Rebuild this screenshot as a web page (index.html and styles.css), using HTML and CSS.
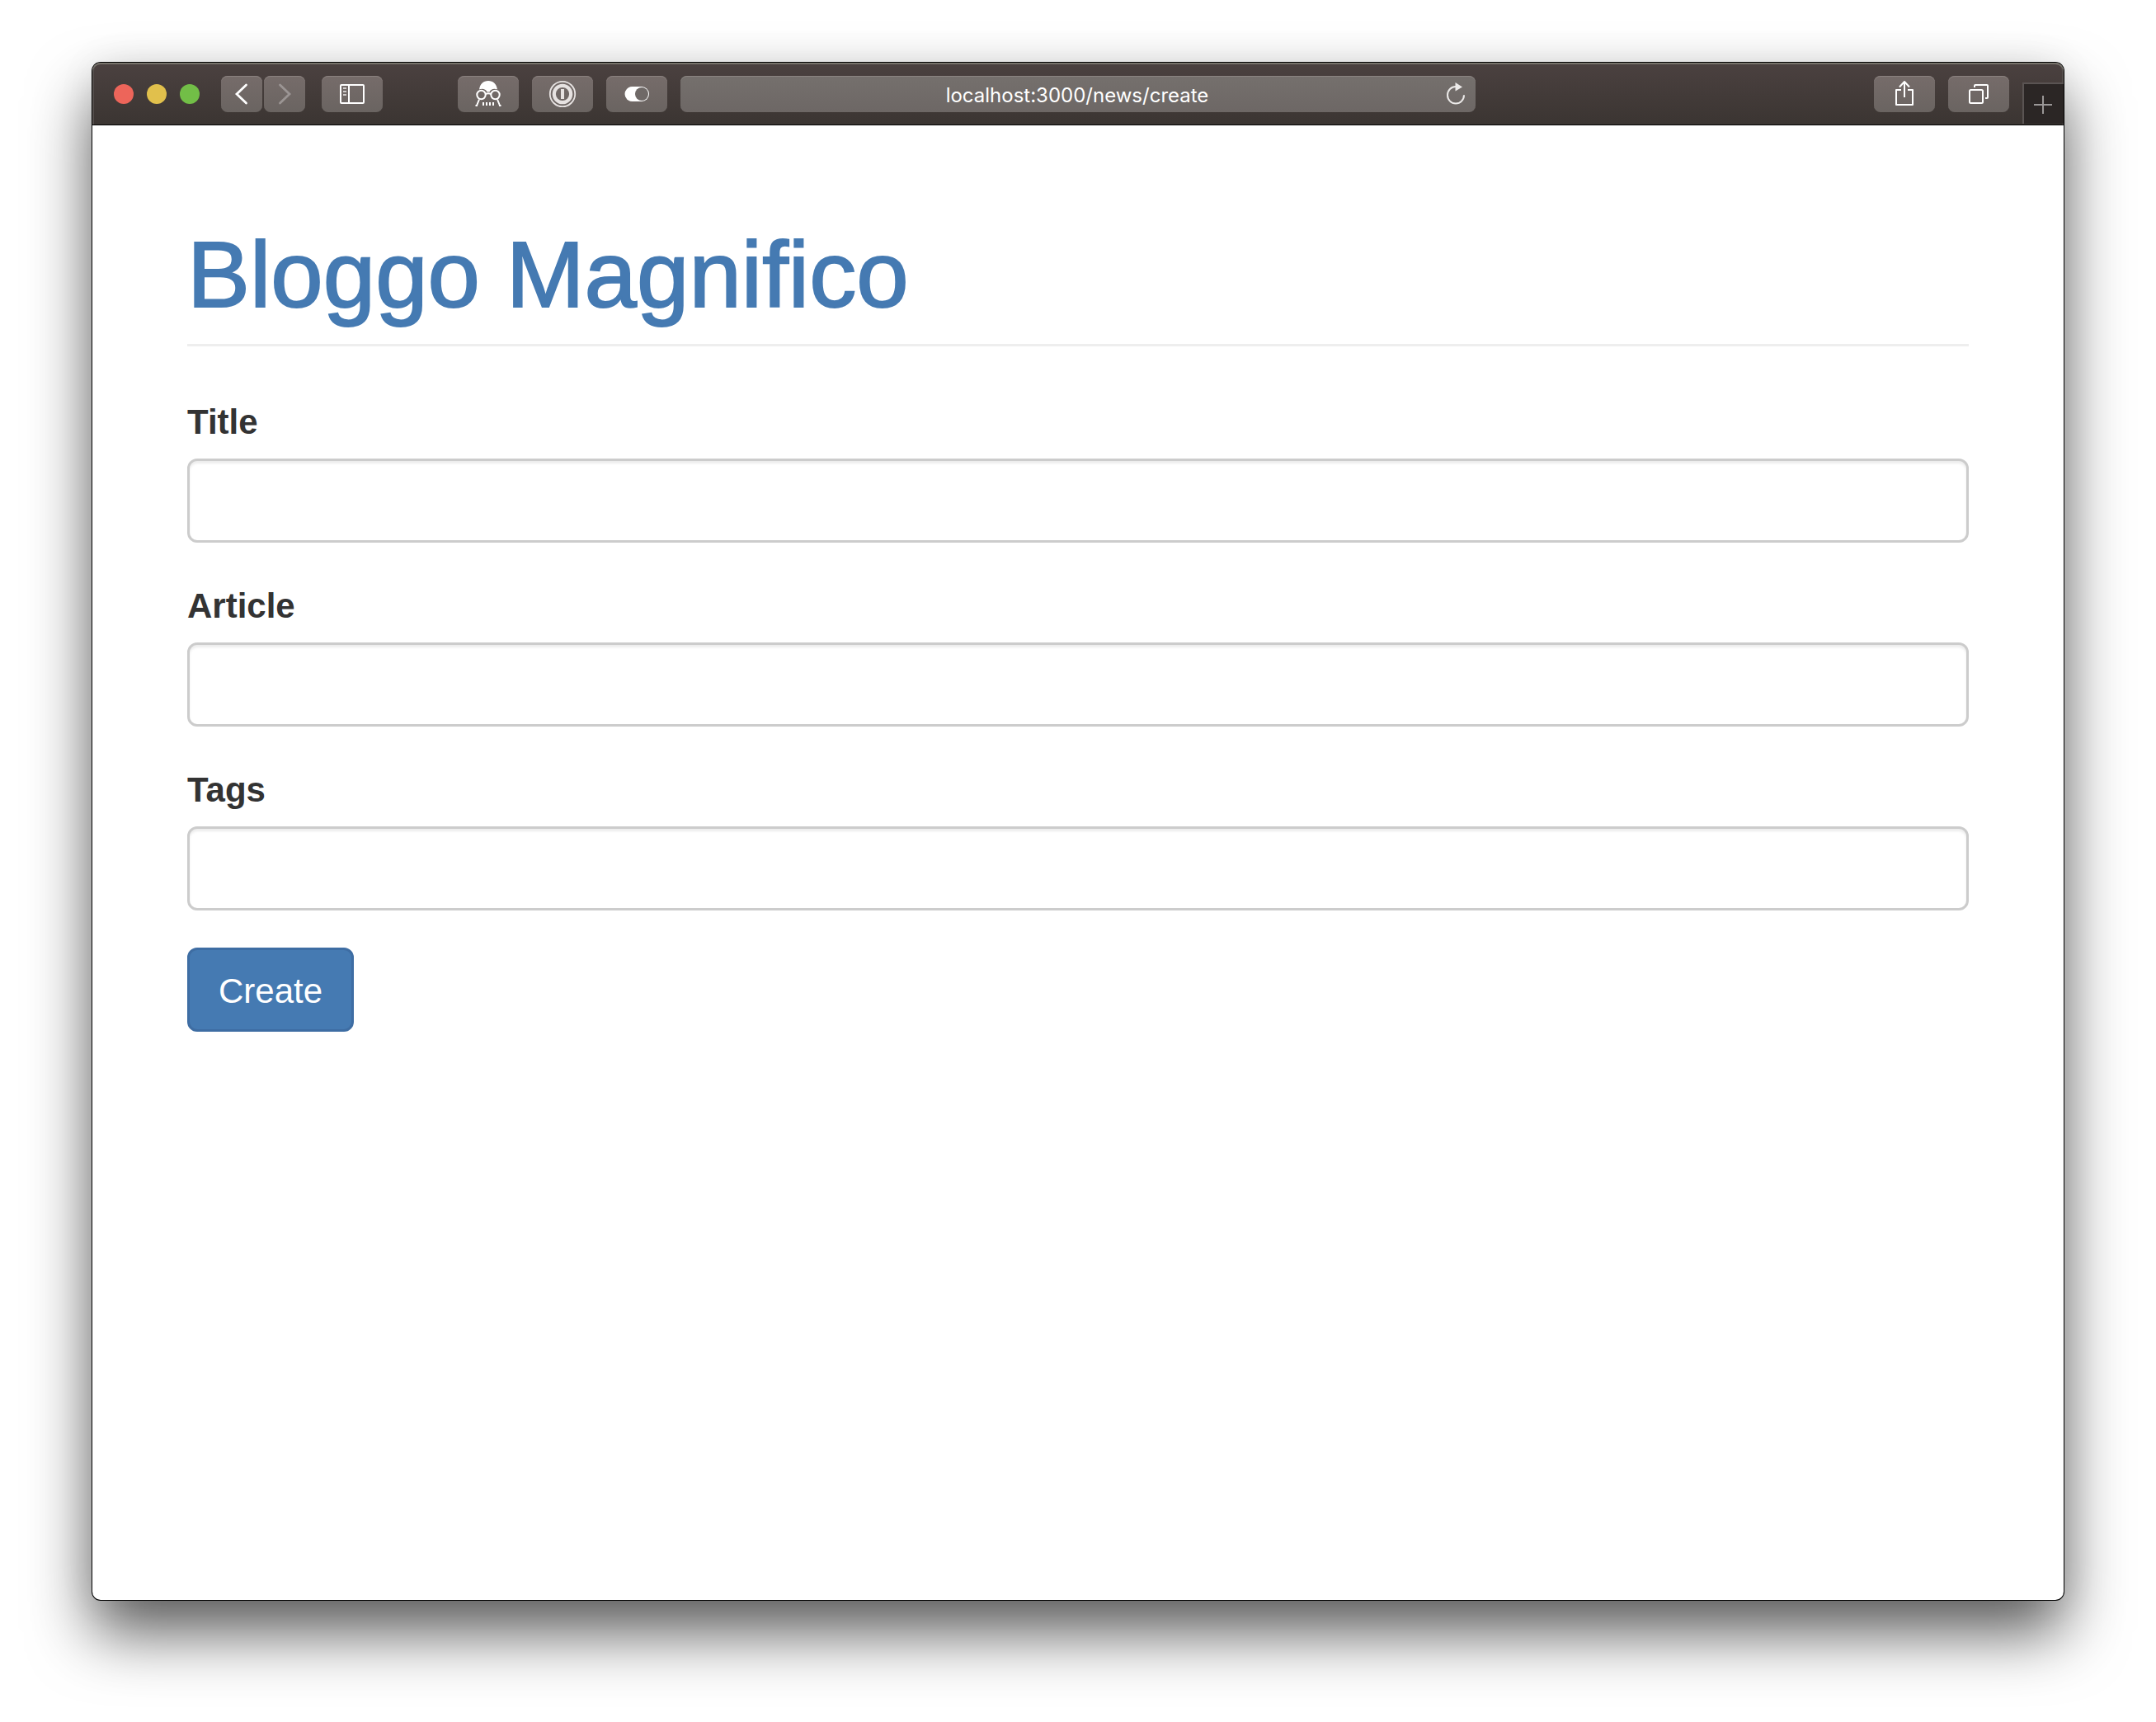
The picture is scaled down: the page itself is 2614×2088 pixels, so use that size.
FILE: index.html
```html
<!DOCTYPE html>
<html lang="en">
<head>
  <meta charset="utf-8">
  <meta name="viewport" content="width=device-width, initial-scale=1">
  <title>Bloggo Magnifico</title>
  <link rel="stylesheet" href="styles.css">
</head>
<body>
  <div class="window">
    <header class="toolbar">
      <div class="toolbar-side">
        <div class="lights">
          <span class="light light-close"></span>
          <span class="light light-minimize"></span>
          <span class="light light-zoom"></span>
        </div>
        <div class="history">
          <button class="tool tool-narrow" type="button" aria-label="Back">
            <svg width="50" height="44" viewBox="0 0 50 44" fill="none" stroke="#fff" stroke-width="2.8" stroke-linecap="round"><path d="M30.500 11L19 22L30.500 33"/></svg>
          </button>
          <button class="tool tool-narrow" type="button" aria-label="Forward">
            <svg width="50" height="44" viewBox="0 0 50 44" fill="none" stroke="#9b9594" stroke-width="2.800" stroke-linecap="round"><path d="M19.500 11L31 22L19.500 33"/></svg>
          </button>
        </div>
        <button class="tool" type="button" aria-label="Sidebar">
          <svg width="74" height="44" viewBox="0 0 74 44" fill="none" stroke="#fff" stroke-width="2"><rect x="23" y="11" width="28" height="22" rx="1"/><path d="M33 11V33"/><path d="M26 15h4M26 19h4M26 23h4" stroke="#d0cccb"/></svg>
        </button>
        <div class="extensions">
          <button class="tool" type="button" aria-label="Ghost mode">
            <svg width="74" height="44" viewBox="0 0 74 44" fill="none" stroke="#fff" stroke-width="2"><path d="M26 16.500C27 10 31 6 37 6S47 10 48 16.500C44 15 40 16 38.500 19.500H35.500C34 16 30 15 26 16.500Z" fill="#fff" stroke="none"/><circle cx="28.500" cy="23" r="5.200"/><circle cx="45.500" cy="23" r="5.200"/><path d="M33.500 22Q37 20.500 40.500 22M26 28.500L23 36M21.500 36H24M48 28.500L51 36M50 36H52.500"/><path d="M31 32v4M35 32v4M39 32v4M43 32v4"/></svg>
          </button>
          <button class="tool" type="button" aria-label="Passwords">
            <svg width="74" height="44" viewBox="0 0 74 44" fill="none" stroke="#e6e2e1"><circle cx="37" cy="22" r="15.200" stroke-width="1.800"/><circle cx="37" cy="22" r="10.200" stroke-width="4.200"/><path d="M37 16V28" stroke-width="4"/></svg>
          </button>
          <button class="tool" type="button" aria-label="Content switch">
            <svg width="74" height="44" viewBox="0 0 74 44"><rect x="22.500" y="13" width="29.500" height="18" rx="9" fill="#fff"/><circle cx="43" cy="22" r="8" fill="#6f6967"/></svg>
          </button>
        </div>
      </div>
      <div class="address">
        <input class="address-input" type="text" value="localhost:3000/news/create" aria-label="Address">
        <button class="reload" type="button" aria-label="Reload">
          <svg width="28" height="28" viewBox="0 0 28 28"><path d="M14 5A10 10.300 0 1 0 24 15.300" fill="none" stroke="#eceae9" stroke-width="2"/><path d="M13.500 0L22 5.500L13.500 10.500Z" fill="#eceae9"/></svg>
        </button>
      </div>
      <div class="toolbar-side toolbar-end">
        <button class="tool" type="button" aria-label="Share">
          <svg width="74" height="44" viewBox="0 0 74 44" fill="none" stroke="#fff" stroke-width="2" stroke-linejoin="round"><path d="M33 17H27V35H47V17H41M37 26V7.500M31 13.500L37 7L43 13.500"/></svg>
        </button>
        <button class="tool" type="button" aria-label="Show all tabs">
          <svg width="74" height="44" viewBox="0 0 74 44" fill="none" stroke="#fff" stroke-width="2"><rect x="26" y="17" width="16" height="16" rx="1.500"/><path d="M32 14V12Q32 11 33 11H47Q48 11 48 12V26Q48 27 47 27H45"/></svg>
        </button>
        <button class="new-tab" type="button" aria-label="New tab">
          <svg width="48" height="48" viewBox="0 0 48 48" stroke="#9a9797" stroke-width="2"><path d="M12 25H34M23 14V36"/></svg>
        </button>
      </div>
    </header>
    <main class="page">
      <h1 class="page-header"><a class="brand" href="#">Bloggo Magnifico</a></h1>
      <form class="form">
        <div class="form-group">
          <label class="form-label" for="title">Title</label>
          <input class="form-control" id="title" type="text">
        </div>
        <div class="form-group">
          <label class="form-label" for="article">Article</label>
          <input class="form-control" id="article" type="text">
        </div>
        <div class="form-group">
          <label class="form-label" for="tags">Tags</label>
          <input class="form-control" id="tags" type="text">
        </div>
        <button class="submit" type="submit">Create</button>
      </form>
    </main>
  </div>
</body>
</html>
```
FILE: styles.css
```css
* {
  box-sizing: border-box;
}

body {
  display: flex;
  min-height: 100vh;
  margin: 0;
  padding: 76px 112px 148px;
  background: #fff;
  font-family: "Liberation Sans", Arial, sans-serif;
}

button,
input {
  margin: 0;
  font-family: inherit;
}

svg {
  display: block;
}

/* Browser window */

.window {
  display: flex;
  flex: 1;
  flex-direction: column;
  min-width: 0;
  border-radius: 10px;
  background: #fff;
  box-shadow: 0 0 0 1px #000, 0 40px 76px rgba(0, 0, 0, 0.64), 0 0 50px rgba(0, 0, 0, 0.06);
}

.toolbar {
  display: grid;
  grid-template-columns: 1fr minmax(0, 964px) 1fr;
  height: 76px;
  padding-top: 16px;
  border-bottom: 1px solid #000;
  border-radius: 10px 10px 0 0;
  background: linear-gradient(#4b4140, #3b3532);
  box-shadow: inset 0 2px 0 #77736b, inset 2px 0 0 #544e4c, inset -2px 0 0 #544e4c;
}

.toolbar-side {
  display: flex;
  align-items: flex-start;
  padding: 0 16px 0 26px;
}

.toolbar-end {
  justify-content: flex-end;
  gap: 16px;
  padding: 0;
}

.lights {
  display: flex;
  gap: 16px;
  padding: 10px 26px 10px 0;
}

.light {
  width: 24px;
  height: 24px;
  border-radius: 50%;
}

.light-close {
  background: #ed655a;
}

.light-minimize {
  background: #e1c04c;
}

.light-zoom {
  background: #72be47;
}

.history {
  display: flex;
  gap: 2px;
  margin-right: 20px;
}

.extensions {
  display: flex;
  gap: 16px;
  margin-left: auto;
}

.tool {
  width: 74px;
  height: 44px;
  padding: 0;
  border: 0;
  border-radius: 8px;
  background: linear-gradient(#766c6a, #6a6461);
  box-shadow: inset 0 1px 0 #8a817f;
}

.tool-narrow {
  width: 50px;
}

.address {
  display: flex;
  align-items: center;
  height: 44px;
  border-radius: 8px;
  background: linear-gradient(#75706d, #6d6765);
  box-shadow: inset 0 1px 0 #8a8481;
}

.address-input {
  flex: 1;
  min-width: 0;
  height: 44px;
  padding: 2px 0 0 36px;
  border: 0;
  background: none;
  color: #fff;
  font-family: Inter, sans-serif;
  font-size: 24px;
  text-align: center;
}

.reload {
  width: 28px;
  height: 28px;
  margin-right: 10px;
  padding: 0;
  border: 0;
  background: none;
}

.new-tab {
  width: 50px;
  height: 50px;
  margin-top: 8px;
  padding: 0;
  border: 2px solid #5a5453;
  border-width: 2px 0 0 2px;
  background: #2b2625;
}

/* Page content */

.page {
  padding: 121px 115px;
}

.page-header {
  margin: 0 0 60px;
  padding-bottom: 25px;
  border-bottom: 3px solid #eee;
  font-size: 114px;
  font-weight: 400;
  line-height: 119px;
}

.brand {
  color: #457ab2;
  text-decoration: none;
  -webkit-text-stroke: 2px #457ab2;
}

.form-group {
  margin-bottom: 45px;
}

.form-label {
  display: block;
  margin-bottom: 13px;
  color: #333;
  font-size: 42px;
  font-weight: 700;
  line-height: 63px;
}

.form-control {
  display: block;
  width: 100%;
  height: 102px;
  padding: 18px 36px;
  border: 3px solid #ccc;
  border-radius: 12px;
  background: #fff;
  box-shadow: inset 0 3px 3px rgba(0, 0, 0, 0.075);
  color: #555;
  font-size: 42px;
}

.submit {
  display: block;
  height: 102px;
  padding: 3px 35px 0;
  border: 3px solid #3e6da3;
  border-radius: 12px;
  background: #457ab2;
  color: #fff;
  font-size: 42px;
}
```
